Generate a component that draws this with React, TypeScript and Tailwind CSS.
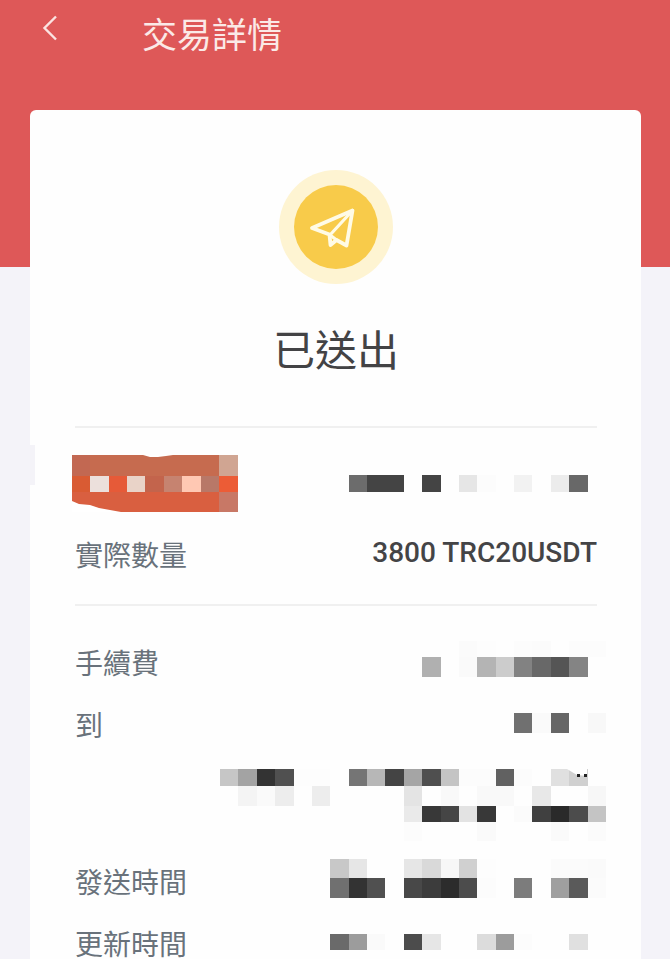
import type { ReactNode } from "react";

type Band = { y: number; h: number; cells: Record<number, string> };

const COLUMNS = 21;

const balance: Band[] = [
  {
    y: 0,
    h: 17,
    cells: { 7: "#6c6c6c", 8: "#444444", 9: "#444444", 11: "#444444", 13: "#e6e6e6", 14: "#fcfcfc", 16: "#f2f2f2", 18: "#ececec", 19: "#686868" },
  },
];

const fee: Band[] = [
  { y: 0, h: 16, cells: { 13: "#fbfbfb", 14: "#fdfdfd", 16: "#fcfcfc", 17: "#fbfbfb", 19: "#fcfcfc", 20: "#fcfcfc" } },
  {
    y: 16,
    h: 20,
    cells: { 11: "#b0b0b0", 13: "#fafafa", 14: "#b4b4b4", 15: "#cccccc", 16: "#828282", 17: "#686868", 18: "#555555", 19: "#848484" },
  },
];

const recipient: Band[] = [
  { y: 0, h: 20, cells: { 16: "#707070", 17: "#fafafa", 18: "#666666", 20: "#f8f8f8" } },
];

const address: Band[] = [
  {
    y: 0,
    h: 17,
    cells: {
      0: "#c6c6c6", 1: "#a3a3a3", 2: "#333333", 3: "#505050", 4: "#fdfdfd", 5: "#fdfdfd",
      7: "#757575", 8: "#b7b7b7", 9: "#444444", 10: "#a5a5a5", 11: "#4f4f4f", 12: "#c4c4c4",
      13: "#fcfcfc", 14: "#fcfcfc", 15: "#616161", 16: "#fcfcfc", 18: "#e0e0e0", 19: "#d0d0d0",
    },
  },
  {
    y: 17,
    h: 20,
    cells: { 1: "#f4f4f4", 2: "#fafafa", 3: "#ededed", 5: "#ededed", 10: "#e4e4e4", 12: "#f9f9f9", 14: "#f9f9f9", 15: "#f9f9f9", 17: "#e8e8e8", 20: "#f7f7f7" },
  },
  {
    y: 37,
    h: 16,
    cells: { 10: "#eaeaea", 11: "#383838", 12: "#454545", 13: "#e3e3e3", 14: "#383838", 16: "#fbfbfb", 17: "#404040", 18: "#2a2a2a", 19: "#4c4c4c", 20: "#c4c4c4" },
  },
  { y: 53, h: 19, cells: { 10: "#fcfcfc", 14: "#fafafa", 18: "#fafafa", 20: "#fbfbfb" } },
];

const sentAt: Band[] = [
  {
    y: 0,
    h: 19,
    cells: { 6: "#c8c8c8", 7: "#e6e6e6", 10: "#e6e6e6", 11: "#d9d9d9", 12: "#f7f7f7", 13: "#d0d0d0", 14: "#fdfdfd", 18: "#fbfbfb", 19: "#fbfbfb", 20: "#fafafa" },
  },
  {
    y: 19,
    h: 20,
    cells: {
      6: "#707070", 7: "#333333", 8: "#505050", 10: "#484848", 11: "#3c3c3c", 12: "#2c2c2c", 13: "#4c4c4c",
      14: "#fcfcfc", 16: "#7c7c7c", 18: "#9f9f9f", 19: "#5a5a5a", 20: "#fbfbfb",
    },
  },
];

const updatedAt: Band[] = [
  {
    y: 0,
    h: 16,
    cells: { 6: "#6a6a6a", 7: "#9c9c9c", 8: "#fafafa", 10: "#4c4c4c", 11: "#e6e6e6", 14: "#dcdcdc", 15: "#9c9c9c", 16: "#fcfcfc", 19: "#e0e0e0" },
  },
];

// Pixelated value; every column is 1/21 of the width
function Mosaic({ bands, height, children }: { bands: Band[]; height: number; children?: ReactNode }) {
  return (
    <svg
      aria-hidden="true"
      width={386}
      height={height}
      viewBox={`0 0 386 ${height}`}
      shapeRendering="crispEdges"
      className="-mr-[9px] shrink-0"
    >
      {bands.map((band) =>
        Object.entries(band.cells).map(([col, fill]) => (
          <rect
            key={`${band.y}-${col}`}
            x={(Number(col) * 386) / COLUMNS}
            y={band.y}
            width={386 / COLUMNS}
            height={band.h}
            fill={fill}
          />
        )),
      )}
      {children}
    </svg>
  );
}

function HiddenLabel() {
  return (
    <svg aria-hidden="true" width="166" height="57" viewBox="0 0 166 57" className="-ml-[3px] shrink-0">
      <g shapeRendering="crispEdges">
        <path d="M0 0h166v21H0z" fill="#c66b4f" />
        <path d="M0 0h18v21H0z" fill="#c26852" />
        <path d="M147 0h19v21h-19z" fill="#d0a592" />
        <path d="M0 21h18v16H0z" fill="#d95b33" />
        <path d="M18 21h19v16H18z" fill="#ece0dc" />
        <path d="M37 21h18v16H37z" fill="#e65a38" />
        <path d="M55 21h18v16H55z" fill="#e9d3c8" />
        <path d="M73 21h19v16H73z" fill="#c3644c" />
        <path d="M92 21h18v16H92z" fill="#c68370" />
        <path d="M110 21h19v16h-19z" fill="#ffc8b3" />
        <path d="M129 21h18v16h-18z" fill="#b87868" />
        <path d="M147 21h19v16h-19z" fill="#ec5c36" />
        <path d="M0 37h147v20H0z" fill="#d95f40" />
        <path d="M147 37h19v20h-19z" fill="#c87866" />
      </g>
      <path d="M0 46 7 49 18 50 27 53 49 57H0z" fill="#fff" />
      <path d="M71 0h30l-7 1-8 1h-8z" fill="#fff" />
    </svg>
  );
}

function Row({ label, children }: { label: string; children: ReactNode }) {
  return (
    <div className="flex h-7 items-center justify-between">
      <dt className="shrink-0 pb-[3px] text-[28px] leading-7 text-[#69727b]">{label}</dt>
      <dd className="flex min-w-0 items-center justify-end">{children}</dd>
    </div>
  );
}

export default function App() {
  return (
    <div className="flex min-h-screen flex-col bg-[#f4f3f9] font-['Noto_Sans_CJK_TC',sans-serif]">
      <header className="h-[267px] bg-[#de5858]">
        <div className="flex items-start pl-[30px]">
          <button type="button" aria-label="返回" className="flex h-14 w-10 items-center justify-center">
            <svg width="16" height="26" viewBox="0 0 16 26" fill="none" stroke="#fbe3e1" strokeWidth="2.4">
              <path d="M14 1.5 2.5 13 14 24.5" />
            </svg>
          </button>
          <h1 className="ml-[72px] text-[35px] leading-[66px] text-[#fbe9e7]">交易詳情</h1>
        </div>
      </header>

      <main className="relative mr-[29px] ml-[30px] -mt-[157px] grow rounded-t-md bg-[#fefefe] pt-[60px] pr-11 pl-[45px]">
        <span className="absolute top-[335px] left-0 h-10 w-[5px] bg-[#f4f3f8]" />

        <section className="flex flex-col items-center">
          <div className="flex size-[114px] items-center justify-center rounded-full bg-[#fef4d2]">
            <div className="flex size-[84px] items-center justify-center rounded-full bg-[#f8cb4a]">
              <svg width="84" height="84" viewBox="0 0 84 84" fill="none" stroke="#fffbe6" strokeWidth="3.8" strokeLinejoin="round" strokeLinecap="round">
                <path d="M58.5 25.5 18 43 35.5 49.5 36.5 60 42.5 55 52.5 60.5z" />
                <path d="M58.5 25.5 36 50 42.5 55" strokeWidth="3.2" />
              </svg>
            </div>
          </div>
          <h2 className="mt-9 text-[42px] leading-[56px] text-[#434345]">已送出</h2>
        </section>

        <dl className="mt-[50px] border-t-2 border-[#f0f0f0] pt-[27px] pb-[35px]">
          <div className="flex items-center justify-between">
            <dt>
              <HiddenLabel />
            </dt>
            <dd className="-ml-[40px]">
              <Mosaic bands={balance} height={17} />
            </dd>
          </div>
          <div className="mt-[29px]">
            <Row label="實際數量">
              <span className="pb-1 font-[Roboto,sans-serif] text-[28px] leading-7 font-medium whitespace-nowrap text-[#444446]">
                3800 TRC20USDT
              </span>
            </Row>
          </div>
        </dl>

        <dl className="flex flex-col gap-[34px] border-t-2 border-[#f0f0f0] pt-[43px]">
          <Row label="手續費">
            <Mosaic bands={fee} height={44} />
          </Row>
          <div>
            <Row label="到">
              <Mosaic bands={recipient} height={24} />
            </Row>
            <div className="mt-[30px] -mb-[7px] flex justify-end">
              <Mosaic bands={address} height={72}>
                <path d="M347 0h20v7l-10-1z" fill="#fefefe" shapeRendering="auto" />
                <path d="M357 5h3v3h-3zM364 5h3v3h-3z" fill="#222" />
              </Mosaic>
            </div>
          </div>
          <Row label="發送時間">
            <Mosaic bands={sentAt} height={46} />
          </Row>
          <Row label="更新時間">
            <Mosaic bands={updatedAt} height={20} />
          </Row>
        </dl>
      </main>
    </div>
  );
}
